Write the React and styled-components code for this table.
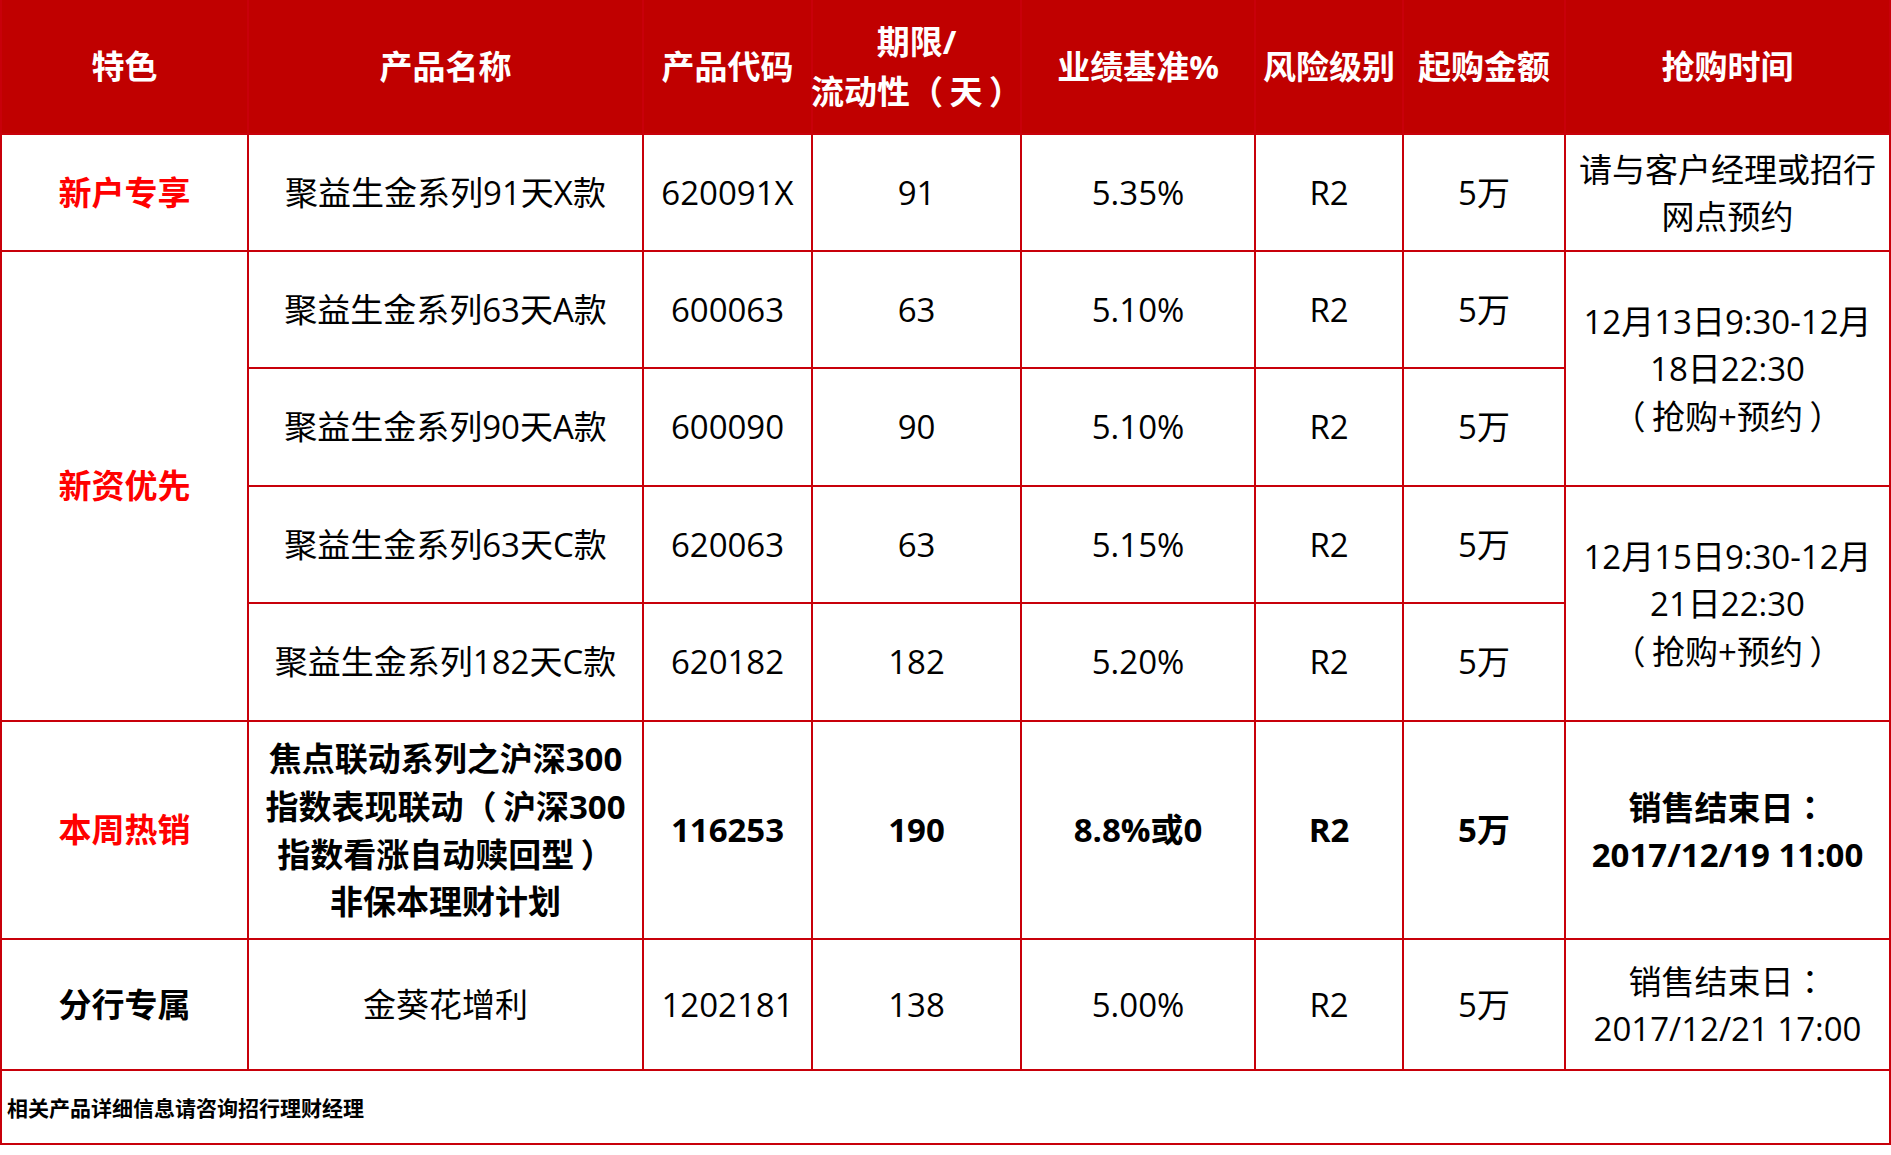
import React from "react";
import styled, { createGlobalStyle } from "styled-components";

const GlobalStyle = createGlobalStyle`
  html, body {
    margin: 0;
    padding: 0;
    background: #ffffff;
  }
  body {
    font-family: "Open Sans", "Noto Sans CJK SC", sans-serif;
    color: #000000;
  }
`;

const Page = styled.div`
  width: 1891px;
  height: 1155px;
  background: #ffffff;
`;

const Sheet = styled.div`
  display: grid;
  grid-template-columns: 245px 393px 167px 207px 232px 146px 160px 323px;
  grid-template-rows: 133px 115px 115px 116px 115px 116px 216px 129px 72px;
  gap: 2px;
  padding: 0 2px 2px 2px;
  background: #c8000a;
`;

const HeadCell = styled.div`
  background: #c00000;
  color: #ffffff;
  font-weight: 700;
  font-size: 33px;
  line-height: 48px;
  display: flex;
  align-items: center;
  justify-content: center;
  text-align: center;
  white-space: nowrap;
`;

const Cell = styled.div`
  background: #ffffff;
  display: flex;
  align-items: center;
  justify-content: center;
  text-align: center;
  white-space: nowrap;
  font-size: 33px;
  line-height: ${(p) => (p.$tight ? "47px" : "40px")};
  font-weight: ${(p) => (p.$bold ? 700 : 400)};
  color: ${(p) => (p.$red ? "#ff0000" : "#000000")};
  grid-row: ${(p) => (p.$rows ? `span ${p.$rows}` : "auto")};
`;

/* full-width punctuation with breathing room on its inner side, as in the reference */
const Punct = styled.span`
  display: inline-block;
  font-family: "Noto Sans CJK TC", "Noto Sans CJK SC", sans-serif;
  margin-left: ${(p) => (p.$side === "close" ? "0.2em" : "0")};
  margin-right: ${(p) => (p.$side === "open" ? "0.2em" : "0")};
`;

const Footer = styled.div`
  grid-column: 1 / -1;
  background: #ffffff;
  display: flex;
  align-items: center;
  padding-left: 5px;
  font-size: 21px;
  font-weight: 700;
  color: #000000;
`;

const LP = "\uFF08";
const RP = "\uFF09";
const COLON = "\uFF1A";
const PUNCT_RE = /([\uFF08\uFF09\uFF1A])/;
const SIDE = { [LP]: "open", [RP]: "close", [COLON]: "none" };

/* split a string so that full-width brackets / colons get the centred form */
const Text = ({ children }) => {
  const parts = String(children).split(PUNCT_RE);
  return parts.map((p, i) =>
    p in SIDE ? (
      <Punct key={i} $side={SIDE[p]}>
        {p}
      </Punct>
    ) : (
      <React.Fragment key={i}>{p}</React.Fragment>
    )
  );
};

const Lines = ({ lines }) => (
  <span>
    {lines.map((l, i) => (
      <React.Fragment key={i}>
        {i > 0 && <br />}
        <Text>{l}</Text>
      </React.Fragment>
    ))}
  </span>
);

const headers = [
  ["特色"],
  ["产品名称"],
  ["产品代码"],
  ["期限/", `流动性${LP}天${RP}`],
  ["业绩基准%"],
  ["风险级别"],
  ["起购金额"],
  ["抢购时间"],
];

export default function App() {
  return (
    <Page>
      <GlobalStyle />
      <Sheet>
        {headers.map((h, i) => (
          <HeadCell key={i}>
            <Lines lines={h} />
          </HeadCell>
        ))}

        {/* 新户专享 */}
        <Cell $red $bold>新户专享</Cell>
        <Cell>聚益生金系列91天X款</Cell>
        <Cell>620091X</Cell>
        <Cell>91</Cell>
        <Cell>5.35%</Cell>
        <Cell>R2</Cell>
        <Cell>5万</Cell>
        <Cell $tight>
          <Lines lines={["请与客户经理或招行", "网点预约"]} />
        </Cell>

        {/* 新资优先 */}
        <Cell $red $bold $rows={4}>新资优先</Cell>
        <Cell>聚益生金系列63天A款</Cell>
        <Cell>600063</Cell>
        <Cell>63</Cell>
        <Cell>5.10%</Cell>
        <Cell>R2</Cell>
        <Cell>5万</Cell>
        <Cell $tight $rows={2}>
          <Lines lines={["12月13日9:30-12月", "18日22:30", `${LP}抢购+预约${RP}`]} />
        </Cell>

        <Cell>聚益生金系列90天A款</Cell>
        <Cell>600090</Cell>
        <Cell>90</Cell>
        <Cell>5.10%</Cell>
        <Cell>R2</Cell>
        <Cell>5万</Cell>

        <Cell>聚益生金系列63天C款</Cell>
        <Cell>620063</Cell>
        <Cell>63</Cell>
        <Cell>5.15%</Cell>
        <Cell>R2</Cell>
        <Cell>5万</Cell>
        <Cell $tight $rows={2}>
          <Lines lines={["12月15日9:30-12月", "21日22:30", `${LP}抢购+预约${RP}`]} />
        </Cell>

        <Cell>聚益生金系列182天C款</Cell>
        <Cell>620182</Cell>
        <Cell>182</Cell>
        <Cell>5.20%</Cell>
        <Cell>R2</Cell>
        <Cell>5万</Cell>

        {/* 本周热销 */}
        <Cell $red $bold>本周热销</Cell>
        <Cell $bold $tight>
          <Lines
            lines={[
              "焦点联动系列之沪深300",
              `指数表现联动${LP}沪深300`,
              `指数看涨自动赎回型${RP}`,
              "非保本理财计划",
            ]}
          />
        </Cell>
        <Cell $bold>116253</Cell>
        <Cell $bold>190</Cell>
        <Cell $bold>8.8%或0</Cell>
        <Cell $bold>R2</Cell>
        <Cell $bold>5万</Cell>
        <Cell $bold $tight>
          <Lines lines={[`销售结束日${COLON}`, "2017/12/19 11:00"]} />
        </Cell>

        {/* 分行专属 */}
        <Cell $bold>分行专属</Cell>
        <Cell>金葵花增利</Cell>
        <Cell>1202181</Cell>
        <Cell>138</Cell>
        <Cell>5.00%</Cell>
        <Cell>R2</Cell>
        <Cell>5万</Cell>
        <Cell $tight>
          <Lines lines={[`销售结束日${COLON}`, "2017/12/21 17:00"]} />
        </Cell>

        <Footer>相关产品详细信息请咨询招行理财经理</Footer>
      </Sheet>
    </Page>
  );
}
